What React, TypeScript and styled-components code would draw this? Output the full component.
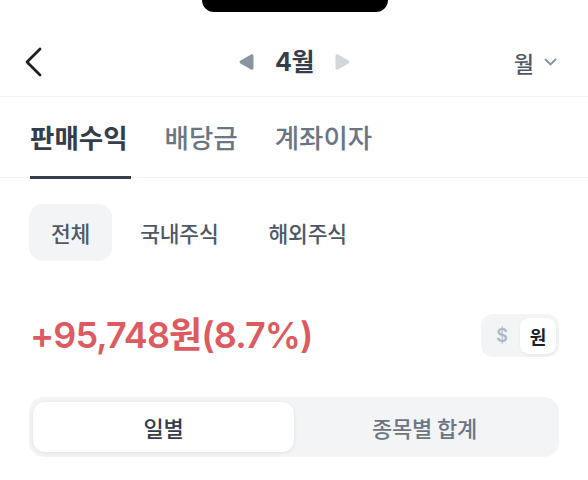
import React from "react";
import styled, { createGlobalStyle } from "styled-components";

const Global = createGlobalStyle`
  html, body { margin: 0; padding: 0; background: #ffffff; }
  body { font-family: "Inter", "Noto Sans CJK KR", sans-serif; -webkit-font-smoothing: antialiased; }
  * { box-sizing: border-box; }
`;

const Screen = styled.div`
  width: 588px;
  height: 480px;
  overflow: hidden;
  background: #fff;
  display: flex;
  flex-direction: column;
`;

const StatusBar = styled.div`
  height: 28px;
  display: flex;
  justify-content: center;
`;

const Notch = styled.div`
  width: 186px;
  height: 12px;
  background: #000;
  border-radius: 0 0 14px 14px;
  margin-left: 2px;
`;

const Header = styled.div`
  height: 69px;
  border-bottom: 1px solid #f2f3f5;
  display: grid;
  grid-template-columns: 1fr auto 1fr;
  align-items: center;
  padding: 0 24px;
`;

const BackButton = styled.div`
  display: flex;
  align-items: center;
`;

const MonthNav = styled.div`
  display: flex;
  align-items: center;
  gap: 20px;
  margin-left: 1px;
`;

const MonthLabel = styled.span`
  font-family: "Inter", "Noto Sans CJK KR", sans-serif;
  font-size: 25px;
  line-height: 30px;
  font-weight: 700;
  color: #333d4b;
  letter-spacing: -0.5px;
`;

const PeriodSelect = styled.div`
  justify-self: end;
  display: flex;
  align-items: center;
  gap: 10px;
  font-family: "Noto Sans CJK KR", sans-serif;
  font-size: 22px;
  font-weight: 500;
  color: #4e5968;
  margin-right: 7px;
`;

const TabBar = styled.div`
  height: 81px;
  border-bottom: 1px solid #f2f3f5;
  display: flex;
  align-items: stretch;
  gap: 34px;
  padding: 0 30px;
`;

const Tab = styled.div<{ $active?: boolean }>`
  display: flex;
  align-items: center;
  font-family: "Noto Sans CJK KR", sans-serif;
  font-size: 26.5px;
  line-height: 32px;
  font-weight: ${(p) => (p.$active ? 700 : 500)};
  letter-spacing: 0;
  color: ${(p) => (p.$active ? "#333d4b" : "#6b7684")};
  border-bottom: 3px solid ${(p) => (p.$active ? "#333d4b" : "transparent")};
  margin-bottom: -2px;
  padding-right: 3px;
`;

const FilterRow = styled.div`
  display: flex;
  gap: 6px;
  padding: 26px 30px 0 29px;
`;

const Chip = styled.div<{ $active?: boolean }>`
  height: 57px;
  padding: 0 22px;
  border-radius: 14px;
  display: flex;
  align-items: center;
  background: ${(p) => (p.$active ? "#f2f4f6" : "transparent")};
  font-family: "Noto Sans CJK KR", sans-serif;
  font-size: 21.5px;
  font-weight: 500;
  letter-spacing: -0.2px;
  color: #4e5968;
`;

const SummaryRow = styled.div`
  display: flex;
  align-items: center;
  justify-content: space-between;
  padding: 53px 29px 0 30px;
`;

const Amount = styled.div`
  font-family: "Inter", "Noto Sans CJK KR", sans-serif;
  font-size: 36px;
  line-height: 43px;
  font-weight: 600;
  letter-spacing: -0.9px;
  color: #dd5a5f;
`;

const CurrencyToggle = styled.div`
  display: flex;
  align-items: center;
  height: 43px;
  padding: 3px;
  border-radius: 12px;
  background: #f2f4f6;
`;

const CurrencyOption = styled.div<{ $active?: boolean }>`
  width: 36px;
  height: 36px;
  border-radius: 9px;
  display: flex;
  align-items: center;
  justify-content: center;
  background: ${(p) => (p.$active ? "#ffffff" : "transparent")};
  box-shadow: ${(p) => (p.$active ? "0 1px 3px rgba(0,0,0,0.06)" : "none")};
  font-family: "Inter", "Noto Sans CJK KR", sans-serif;
  font-size: 18px;
  font-weight: ${(p) => (p.$active ? 700 : 600)};
  color: ${(p) => (p.$active ? "#191f28" : "#b0b8c1")};
`;

const Segmented = styled.div`
  margin: 40px 29px 0 29px;
  height: 60px;
  padding: 5px 4px;
  border-radius: 15px;
  background: #f2f4f6;
  display: grid;
  grid-template-columns: 1fr 1fr;
`;

const Segment = styled.div<{ $active?: boolean }>`
  display: flex;
  align-items: center;
  justify-content: center;
  border-radius: 12px;
  background: ${(p) => (p.$active ? "#ffffff" : "transparent")};
  box-shadow: ${(p) => (p.$active ? "0 1px 4px rgba(0,0,0,0.08)" : "none")};
  font-family: "Noto Sans CJK KR", sans-serif;
  font-size: 22px;
  font-weight: 500;
  letter-spacing: -0.2px;
  color: ${(p) => (p.$active ? "#333d4b" : "#6b7684")};
`;

const Triangle = ({ dir, color }: { dir: "left" | "right"; color: string }) => (
  <svg width="17" height="18" viewBox="0 0 17 18">
    {dir === "left" ? (
      <path d="M2.5 7.6 L13 1.6 C14.3 0.9 15.5 1.6 15.5 3 V15 C15.5 16.4 14.3 17.1 13 16.4 L2.5 10.4 C1.3 9.7 1.3 8.3 2.5 7.6 Z" fill={color} />
    ) : (
      <path d="M14.5 7.6 L4 1.6 C2.7 0.9 1.5 1.6 1.5 3 V15 C1.5 16.4 2.7 17.1 4 16.4 L14.5 10.4 C15.7 9.7 15.7 8.3 14.5 7.6 Z" fill={color} />
    )}
  </svg>
);

export default function App() {
  return (
    <Screen>
      <Global />
      <StatusBar>
        <Notch />
      </StatusBar>
      <Header>
        <BackButton>
          <svg width="20" height="30" viewBox="0 0 20 30">
            <path d="M16 2 L3 15 L16 28" fill="none" stroke="#191f28" strokeWidth="2.8" strokeLinecap="round" strokeLinejoin="round" />
          </svg>
        </BackButton>
        <MonthNav>
          <Triangle dir="left" color="#8b95a1" />
          <MonthLabel>4월</MonthLabel>
          <Triangle dir="right" color="#d1d6db" />
        </MonthNav>
        <PeriodSelect>
          월
          <svg width="13" height="8" viewBox="0 0 13 8">
            <path d="M1.5 1.5 L6.5 6.5 L11.5 1.5" fill="none" stroke="#8b95a1" strokeWidth="1.8" strokeLinecap="round" strokeLinejoin="round" />
          </svg>
        </PeriodSelect>
      </Header>
      <TabBar>
        <Tab $active>판매수익</Tab>
        <Tab>배당금</Tab>
        <Tab>계좌이자</Tab>
      </TabBar>
      <FilterRow>
        <Chip $active>전체</Chip>
        <Chip>국내주식</Chip>
        <Chip>해외주식</Chip>
      </FilterRow>
      <SummaryRow>
        <Amount>+95,748원(8.7%)</Amount>
        <CurrencyToggle>
          <CurrencyOption>$</CurrencyOption>
          <CurrencyOption $active>원</CurrencyOption>
        </CurrencyToggle>
      </SummaryRow>
      <Segmented>
        <Segment $active>일별</Segment>
        <Segment>종목별 합계</Segment>
      </Segmented>
    </Screen>
  );
}
